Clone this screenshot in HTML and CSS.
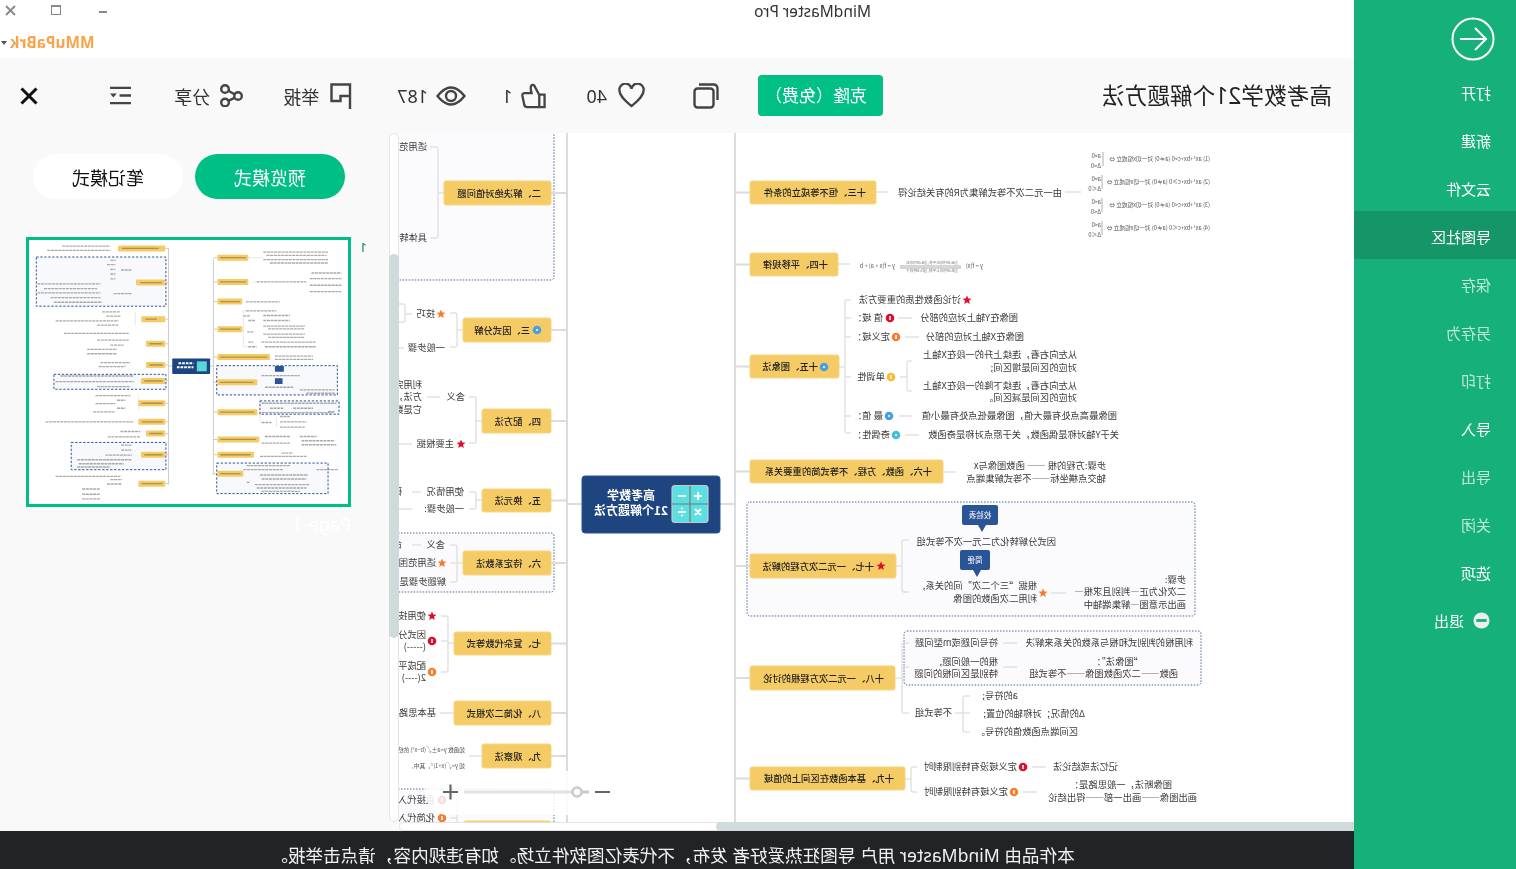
FILE: index.html
```html
<!DOCTYPE html>
<html lang="zh-CN">
<head>
<meta charset="utf-8">
<title>MindMaster Pro</title>
<link rel="stylesheet" href="styles.css">
</head>
<body>
<div class="page">
  <aside class="sidebar">
    <svg class="back" viewBox="0 0 44 44"><circle cx="22" cy="22" r="20.5"/><path d="M9 22H35M20 11L9 22L20 33"/></svg>
    <nav class="menu">
      <div class="item">打开</div>
      <div class="item">新建</div>
      <div class="item">云文件</div>
      <div class="item active">导图社区</div>
      <div class="item dim">保存</div>
      <div class="item dim">另存为</div>
      <div class="item dim">打印</div>
      <div class="item">导入</div>
      <div class="item dim">导出</div>
      <div class="item dim">关闭</div>
      <div class="item">选项</div>
      <div class="item quit"><svg class="quit-icon" viewBox="0 0 18 18"><circle cx="9" cy="9" r="8.5"/><rect x="3.5" y="7.5" width="11" height="3"/></svg>退出</div>
    </nav>
  </aside>
  <main class="main">
    <header class="titlebar">
      <div class="win-row">
        <span class="app-name">MindMaster Pro</span>
        <div class="win-controls">
          <span class="win-min"></span>
          <span class="win-max"></span>
          <svg class="win-close" viewBox="0 0 11 11"><path d="M1 1L10 10M10 1L1 10"/></svg>
        </div>
      </div>
      <div class="user-row"><span class="caret"></span><span class="user">MMuPaBrk</span></div>
    </header>
    <section class="toolbar">
      <h1 class="doc-title">高考数学21个解题方法</h1>
      <button class="clone">克隆（免费）</button>
      <svg class="ico ico-copy" viewBox="0 0 26 26"><path d="M1.5 17V5.5Q1.5 1.5 5.500 1.500H20"/><rect x="5.500" y="5.500" width="19" height="19" rx="3"/></svg>
      <div class="tool t-heart"><svg class="ico ico-heart" viewBox="0 0 28 25"><path d="M14 23.500C5 16 1.500 12 1.500 7.500A6.200 6.200 0 0 1 14 5.500A6.200 6.200 0 0 1 26.500 7.500C26.500 12 23 16 14 23.500Z"/></svg><span>40</span></div>
      <div class="tool t-thumb"><svg class="ico ico-thumb" viewBox="0 0 26 26"><path d="M1.500 11.500H7V24.500H1.500ZM7 12L12 2.500Q14 .5 15.500 2.500Q16.500 5 15 10H22Q25 10 24.500 13L22.500 22.500Q22 24.500 19.500 24.500H7"/></svg><span>1</span></div>
      <div class="tool t-eye"><svg class="ico ico-eye" viewBox="0 0 30 22"><path d="M1.500 11Q15 -6 28.500 11Q15 28 1.500 11Z"/><circle cx="15" cy="11" r="5"/></svg><span>187</span></div>
      <div class="tool t-flag"><svg class="ico ico-flag" viewBox="0 0 22 26"><path d="M2 26V1.500H20.500V18H11.500V13H2"/></svg><span>举报</span></div>
      <div class="tool t-share"><svg class="ico ico-share" viewBox="0 0 24 23"><circle cx="5" cy="12" r="3.800"/><circle cx="18" cy="5" r="3.800"/><circle cx="18" cy="18.500" r="3.800"/><path d="M8.500 10.200L14.700 6.800M8.500 13.800L14.700 16.800"/></svg><span>分享</span></div>
      <svg class="ico ico-lines" viewBox="0 0 23 20"><path d="M1 2H23M1 18H23M1 10H13"/><polygon class="tri" points="16,8 23,8 19.500,12"/></svg>
      <svg class="ico ico-x" viewBox="0 0 18 18"><path d="M1.500 1.500L16.500 16.500M16.500 1.500L1.500 16.500"/></svg>
    </section>
    <section class="workspace">
      <div class="map-col">
        <svg class="map" viewBox="162 133 955 689" xmlns="http://www.w3.org/2000/svg">
          <defs>
            <polygon id="star" points="0,-4.500 1.300,-1.500 4.500,-1.300 2,.8 2.800,4 0,2.300 -2.800,4 -2,.8 -4.500,-1.300 -1.300,-1.500"/>
          </defs>
          <g transform="translate(1516,0) scale(-1,1)">
            <rect class="box" x="380" y="100" width="174" height="180" rx="3"/>
            <rect class="box" x="380" y="533" width="174" height="59" rx="3"/>
            <rect class="box" x="380" y="789" width="174" height="120" rx="3"/>
            <rect class="box" x="747" y="502" width="448" height="114" rx="3"/>
            <rect class="box" x="904" y="631" width="297" height="54" rx="3"/>

            <path class="trunk" d="M735 133V822M567 133V822M720 504H735M567 504H582M735 192.500H750M735 264.500H750M735 366.500H750M735 471.500H750M735 566H750M735 678H750M735 778.500H750M551 193H567M551 330H567M551 421H567M551 500.500H567M551 563H567M551 643.500H567M551 713H567M551 756H567"/>
            <path class="link" d="M876 192H888M1065 192H1081M838 264H850M839 367H845M851 300H847Q845 300 845 302V431Q845 433 847 433H851M845 318H851M845 337H851M845 377H851M845 416H851M898 318H912M905 337H919M900 377H907M912 361H909Q907 361 907 363V389Q907 391 909 391H912M899 416H912M905 435H919M943 472H956M896 566H902M909 540H904Q902 540 902 542V590Q902 592 904 592H909M1051 593H1066M895 678H902M909 643H904Q902 643 902 645V711Q902 713 904 713H909M902 667H909M1003 643H1017M1003 667H1017M955 713H970M970 696H965Q963 696 963 698V730Q963 732 965 732H970M905 779H911M917 767H913Q911 767 911 769V790Q911 792 913 792H917M1032 767H1046M1023 792H1037"/>
            <path class="link" d="M444 193H438M430 147H436Q438 147 438 149V236Q438 238 436 238H430M463 330H457M450 313H455Q457 313 457 315V345Q457 347 455 347H450M405 314H412M399 304H403Q405 304 405 306V320Q405 322 403 322H399M399 348H404M482 421H476M469 397H474Q476 397 476 399V441Q476 443 474 443H469M427 397H440M399 444H412M482 500H476M469 492H474Q476 492 476 494V507Q476 509 474 509H469M412 492H421M399 509H412M463 563H457M450 545H455Q457 545 457 547V580Q457 582 455 582H450M450 563H457M412 545H421M454 643H448M441 616H446Q448 616 448 618V670Q448 672 446 672H441M441 641H448M454 713H440M482 756H469M450 800H455Q457 800 457 802V822M450 818H457"/>
            <path class="thin" d="M1103 152V166M1102 175V189M1102 198V212M1102 221V235M900 266H961"/>
            <path class="thin" d="M900 268H961"/>

            <rect class="node" x="750" y="181" width="126" height="23" rx="2"/>
            <rect class="node" x="750" y="253" width="88" height="23" rx="2"/>
            <rect class="node" x="750" y="355" width="89" height="23" rx="2"/>
            <rect class="node" x="750" y="460" width="193" height="23" rx="2"/>
            <rect class="node" x="750" y="554" width="146" height="24" rx="2"/>
            <rect class="node" x="750" y="666" width="145" height="24" rx="2"/>
            <rect class="node" x="750" y="767" width="155" height="23" rx="2"/>
            <rect class="node" x="444" y="181" width="107" height="24" rx="2"/>
            <rect class="node" x="463" y="318" width="88" height="24" rx="2"/>
            <rect class="node" x="482" y="409" width="69" height="24" rx="2"/>
            <rect class="node" x="482" y="489" width="69" height="23" rx="2"/>
            <rect class="node" x="463" y="551" width="88" height="24" rx="2"/>
            <rect class="node" x="454" y="632" width="97" height="23" rx="2"/>
            <rect class="node" x="454" y="701" width="97" height="24" rx="2"/>
            <rect class="node" x="482" y="744" width="69" height="24" rx="2"/>
            <rect class="node" x="464" y="821" width="87" height="24" rx="2"/>

            <rect class="center" x="582" y="476" width="138" height="57" rx="3"/>
            <rect class="calc" x="672" y="485.500" width="36" height="37" rx="3"/>
            <path class="calc-grid" d="M690 486V522M672 504H708"/>
            <path class="calc-sign" d="M694 496H702M698 492V500M678 496H686M678 512H686M695 509L701 515M701 509L695 515"/>
            <circle class="calc-dot" cx="682" cy="508.500" r="1"/>
            <circle class="calc-dot" cx="682" cy="515.500" r="1"/>

            <use class="st-red" href="#star" x="967" y="300"/>
            <use class="st-red" href="#star" x="881" y="566"/>
            <use class="st-orange" href="#star" x="1043" y="593"/>
            <use class="st-orange" href="#star" x="441" y="314"/>
            <use class="st-red" href="#star" x="461" y="444"/>
            <use class="st-orange" href="#star" x="442" y="563"/>
            <use class="st-red" href="#star" x="432" y="616"/>

            <circle class="dot-blue" cx="824" cy="367" r="4.300"/>
            <circle class="dot-blue" cx="537" cy="330" r="4.300"/>
            <circle class="dot-red" cx="890" cy="318" r="4.300"/>
            <circle class="dot-orange" cx="896" cy="337" r="4.300"/>
            <circle class="dot-yellow" cx="891" cy="377" r="4.300"/>
            <circle class="dot-blue" cx="889" cy="416" r="4.300"/>
            <circle class="dot-cyan" cx="896" cy="435" r="4.300"/>
            <circle class="dot-red" cx="1023" cy="767" r="4.300"/>
            <circle class="dot-orange" cx="1014" cy="792" r="4.300"/>
            <circle class="dot-red" cx="432" cy="641" r="4.300"/>
            <circle class="dot-orange" cx="432" cy="672" r="4.300"/>
            <circle class="dot-red" cx="442" cy="800" r="4.300"/>
            <circle class="dot-orange" cx="442" cy="818" r="4.300"/>
            <path class="dot-mark" d="M824 366V368M537 329V331M890 316V320M896 335V339M891 375V379M889 415V417M896 434V436M1023 765V769M1014 790V794M432 639V643M432 670V674M442 798V802M442 816V820"/>

            <path class="bubble" d="M964 505H996Q998 505 998 507V523Q998 525 996 525H986L982 532L978 525H964Q962 525 962 523V507Q962 505 964 505Z"/>
            <path class="bubble" d="M962 550H988Q990 550 990 552V568Q990 570 988 570H981L977 577L973 570H962Q960 570 960 568V552Q960 550 962 550Z"/>
          </g>

          <text class="nt" x="650" y="196">十三、恒不等成立的条件</text>
          <text class="nt" x="688" y="268">十四、平移规律</text>
          <text class="nt" x="698" y="370">十五、图象法</text>
          <text class="nt" x="584" y="475">十六、函数、方程、不等式简的重要关系</text>
          <text class="nt" x="642" y="570">十七、一元二次方程的解法</text>
          <text class="nt" x="632" y="682">十八、一元二次方程根的讨论</text>
          <text class="nt" x="622" y="782">十九、基本函数在区间上的值域</text>
          <text class="nt" x="975" y="197">二、解决绝对值问题</text>
          <text class="nt" x="986" y="334">三、因式分解</text>
          <text class="nt" x="975" y="425">四、配方法</text>
          <text class="nt" x="975" y="504">五、换元法</text>
          <text class="nt" x="975" y="567">六、待定系数法</text>
          <text class="nt" x="975" y="647">七、复杂代数等式</text>
          <text class="nt" x="975" y="717">八、化简二次根式</text>
          <text class="nt" x="975" y="760">九、观察法</text>

          <text class="ct" x="885" y="500">高考数学</text>
          <text class="ct" x="885" y="515">21个解题方法</text>

          <text x="454" y="196">由一元二次不等式解集为R的有关结论得</text>
          <text class="fm" x="306" y="161">(1)  ax²+bx+c&gt;0 (a≠0) 对一切x恒成立 ⇔</text>
          <text class="fm" x="306" y="184">(2)  ax²+bx+c≥0 (a≠0) 对一切x恒成立 ⇔</text>
          <text class="fm" x="306" y="207">(3)  ax²+bx+c&lt;0 (a≠0) 对一切x恒成立 ⇔</text>
          <text class="fm" x="306" y="230">(4)  ax²+bx+c≤0 (a≠0) 对一切x恒成立 ⇔</text>
          <text class="fm" x="415" y="158">a&gt;0</text><text class="fm" x="415" y="168">Δ&lt;0</text>
          <text class="fm" x="415" y="181">a&gt;0</text><text class="fm" x="415" y="191">Δ≤0</text>
          <text class="fm" x="415" y="204">a&lt;0</text><text class="fm" x="415" y="214">Δ&lt;0</text>
          <text class="fm" x="415" y="227">a&lt;0</text><text class="fm" x="415" y="237">Δ≤0</text>
          <text class="fm" x="533" y="268">y = f(x)</text>
          <text class="fs" x="558" y="264">当a&gt;0时向左平移,当a&lt;0时向右</text>
          <text class="fs" x="558" y="272">当b&gt;0时向上平移,当b&lt;0时向下</text>
          <text class="fm" x="621" y="268">y = f(x + a) + b</text>

          <text x="555" y="303">讨论函数性质的重要方法</text>
          <text x="633" y="321">值 域：</text><text x="498" y="321">图像在Y轴上对应的部分</text>
          <text x="626" y="340">定义域：</text><text x="492" y="340">图像在X轴上对应的部分</text>
          <text x="631" y="380">单调性</text>
          <text x="439" y="358">从左向右看，连续上升的一段在X轴上</text>
          <text x="439" y="371">对应的区间是增区间;</text>
          <text x="439" y="389">从左向右看，连续下降的一段在X轴上</text>
          <text x="439" y="401">对应的区间是减区间。</text>
          <text x="633" y="419">最 值：</text><text x="399" y="419">图像最高点处有最大值，图像最低点处有最小值</text>
          <text x="626" y="438">奇偶性：</text><text x="397" y="438">关于Y轴对称是偶函数，关于原点对称是奇函数</text>
          <text x="410" y="469">步骤:方程的根 —— 函数图像与x</text>
          <text x="410" y="482">轴交点横坐标——不等式解集端点</text>

          <text class="bt" x="536" y="518">校验表</text>
          <text class="bt" x="541" y="563">简便</text>
          <text x="460" y="545">因式分解转化为二元一次不等式组</text>
          <text x="479" y="589">根据“三个二次”间的关系,</text>
          <text x="479" y="602">利用二次函数的图像</text>
          <text x="330" y="583">步骤:</text>
          <text x="330" y="595">二次化为正—判别且求根—</text>
          <text x="330" y="608">画出示意图—解集端轴中</text>

          <text x="518" y="646">符号问题或m型问题</text>
          <text x="323" y="646">利用根的判别式和根与系数的关系来解决</text>
          <text x="518" y="665">根的一般问题,</text>
          <text x="518" y="677">特别是区间根的问题</text>
          <text x="373" y="665">“图像法”：</text>
          <text x="338" y="677">函数——二次函数图像——不等式组</text>
          <text x="564" y="716">不等式组</text>
          <text x="498" y="699">a的符号;</text>
          <text x="431" y="717">Δ的情况；对称轴的位置;</text>
          <text x="438" y="735">区间端点函数值的符号。</text>
          <text x="499" y="770">定义域没有特别限制时</text>
          <text x="398" y="770">记忆法或结论法</text>
          <text x="508" y="795">定义域有特别限制时</text>
          <text x="344" y="788">图像断法，一般思路是：</text>
          <text x="319" y="801">画出图像——画出一部——得出结论</text>

          <text x="1089" y="150">适用范围</text>
          <text x="1089" y="241">具体转化</text>
          <text x="1081" y="317">技巧</text>
          <text x="1071" y="351">一般步骤</text>
          <text x="1051" y="400">含义</text>
          <text x="1094" y="388">利用完全</text>
          <text x="1094" y="400">方法，</text>
          <text x="1094" y="413">它是数学</text>
          <text x="1062" y="447">主要根据</text>
          <text x="1052" y="495">使用情况</text>
          <text x="1114" y="495">确定</text>
          <text x="1052" y="512">一般步骤:</text>
          <text x="1071" y="548">含义</text>
          <text x="1114" y="548">命题</text>
          <text x="1080" y="566">适用范围</text>
          <text x="1070" y="585">解题步骤是</text>
          <text x="1090" y="619">使用技巧</text>
          <text x="1090" y="638">因式分解</text>
          <text x="1090" y="650">(-----)</text>
          <text x="1090" y="669">配成平方</text>
          <text x="1090" y="681">2(----)</text>
          <text x="1080" y="716">基本思路</text>
          <text class="fm" x="1051" y="752">如函数 y=a±√(b−x²) 的结构</text>
          <text class="fm" x="1051" y="768">如 y=√(x+1)²，其中,</text>
          <text x="1081" y="803">直接代入</text>
          <text x="1081" y="821">化简代入</text>

          <g transform="translate(1516,0) scale(-1,1)">
            <rect class="pill" x="425" y="771" width="201" height="44" rx="22"/>
            <path class="zoom-track" d="M464 792H572"/>
            <circle class="zoom-knob" cx="577" cy="792" r="4.500"/>
            <path class="zoom-stub" d="M582 792H589"/>
            <path class="zoom-btn" d="M443 792H458M450.500 784.500V799.500M595 792H610"/>
          </g>
        </svg>
        <div class="hscroll"><div class="hthumb"></div></div>
      </div>
      <div class="vscroll"><div class="vthumb"></div></div>
      <aside class="panel">
        <div class="modes">
          <button class="mode on">预览模式</button>
          <button class="mode">笔记模式</button>
        </div>
        <div class="thumb-row">
          <span class="page-no">1</span>
          <svg class="thumb" viewBox="85 30 960 792" xmlns="http://www.w3.org/2000/svg">
            <defs><filter id="soft"><feGaussianBlur stdDeviation="2"/></filter></defs>
            <g transform="translate(1130,0) scale(-1,1)" filter="url(#soft)">
              <path class="th-trunk" d="M640 85V735M505 52V765M630 408H640M505 408H516M640 82H652M640 155H652M640 214H652M640 297H652M640 381H652M640 457H652M640 547H652M640 629H652M640 675H652M640 732H652M495 54H505M495 157H505M495 267H505M495 341H505M495 405H505M495 453H505M495 520H505M495 576H505M495 611H505M495 675H505M495 762H505"/>
              <path class="th-link" d="M757 155H770M745 82H790M730 240V350M730 242H738M730 350H745M780 437V548M780 548V578M830 565V592M402 119V190M345 119H402M405 245V285M375 398V410M415 497V546M380 646V702"/>
              <rect class="th-box" x="107" y="80" width="390" height="148"/>
              <rect class="th-box" x="160" y="433" width="337" height="45"/>
              <rect class="th-box" x="212" y="638" width="285" height="82"/>
              <rect class="th-box" x="650" y="407" width="363" height="88"/>
              <rect class="th-box" x="780" y="513" width="238" height="40"/>
              <rect class="th-box" x="650" y="700" width="335" height="92"/>
              <path class="th-text" d="M185 47H330M140 60H330M330 90H345M320 103H345M330 117H345M330 131H345M330 146H345M362 119H395M340 190H395M110 161H300M130 175H290M110 188H300M150 202H300M160 216H305M305 245H360M318 258H360M165 272H355M290 285H355M190 310H385M290 330H385M330 345H370M260 358H350M260 371H350M300 398H390M295 410H375M180 438H400M165 455H400M290 470H390M285 497H390M285 521H345M278 546H345M350 511H375M350 535H375M135 576H400M360 605H420M322 621H420M362 646H395M362 661H395M315 676H395M230 690H395M235 702H370M230 712H330M165 740H360M330 750H365M320 763H365M245 778H300M245 794H300M245 808H300M790 65H985M800 75H980M790 88H985M810 98H985M770 155H920M935 128H1025M930 145H1025M930 165H1025M930 184H1025M738 215H840M738 242H830M730 257H750M790 256H870M745 271H765M790 271H870M742 305H760M790 288H915M805 296H915M790 312H915M805 322H915M745 336H760M785 336H950M745 350H770M795 350H950M825 378H940M825 388H940M785 437H900M795 472H880M900 480H1005M920 490H1005M785 520H1010M810 535H850M880 535H940M985 545H1005M785 548H1000M785 578H815M840 560H870M840 576H920M840 592H915M795 620H870M900 620H950M785 640H870M905 633H1005M905 645H1010M845 670H880M780 680H920M740 708H870M950 720H1015M730 720H850M740 758H750M780 736H925M785 748H920M765 765H930M770 775H920M785 785H900"/>
              <g class="th-node">
                <rect x="652" y="73" width="93" height="18" rx="3"/><rect x="652" y="146" width="93" height="18" rx="3"/><rect x="652" y="205" width="75" height="18" rx="3"/><rect x="652" y="288" width="75" height="18" rx="3"/><rect x="652" y="372" width="158" height="18" rx="3"/><rect x="652" y="448" width="120" height="18" rx="3"/><rect x="652" y="538" width="120" height="18" rx="3"/><rect x="652" y="620" width="126" height="18" rx="3"/><rect x="652" y="666" width="110" height="18" rx="3"/><rect x="652" y="723" width="78" height="18" rx="3"/><rect x="353" y="45" width="142" height="18" rx="3"/><rect x="407" y="148" width="88" height="18" rx="3"/><rect x="423" y="258" width="72" height="18" rx="3"/><rect x="437" y="332" width="58" height="18" rx="3"/><rect x="437" y="396" width="58" height="18" rx="3"/><rect x="422" y="444" width="73" height="18" rx="3"/><rect x="414" y="511" width="81" height="18" rx="3"/><rect x="414" y="567" width="81" height="18" rx="3"/><rect x="437" y="602" width="58" height="18" rx="3"/><rect x="422" y="666" width="73" height="18" rx="3"/><rect x="414" y="753" width="81" height="18" rx="3"/>
              </g>
              <path class="th-node-text" d="M660 82H738M660 155H738M660 214H720M660 297H720M660 381H802M660 457H760M660 547H762M660 629H768M660 675H752M660 732H722M365 54H475M420 157H485M435 267H470M447 341H487M447 405H487M432 453H487M424 520H487M424 576H487M447 611H487M432 675H487M424 762H487"/>
              <rect class="th-center" x="516" y="385" width="114" height="47" rx="3"/>
              <rect class="th-calc" x="590" y="394" width="30" height="30"/>
              <path class="th-white" d="M535 400H580M530 412H580"/>
              <path class="th-bubble" d="M825 408H852V425H825ZM825 445H848V462H825Z"/>
            </g>
            <g transform="translate(1130,0) scale(-1,1)">
              <path class="th-box-line" d="M107 80H497V228H107ZM160 433H497V478H160ZM212 638H497V720H212ZM650 407H1013V495H650ZM780 513H1018V553H780ZM650 700H985V792H650Z"/>
            </g>
          </svg>
        </div>
        <div class="ghost">Page-1</div>
      </aside>
    </section>
    <footer class="banner">本作品由 MindMaster 用户 导图狂热爱好者 发布，不代表亿图软件立场。如有违规内容，请点击举报。</footer>
  </main>
</div>
</body>
</html>
```
FILE: styles.css
```css
* { box-sizing: border-box; }
html, body { margin: 0; padding: 0; overflow: hidden; }
body { font-family: "Noto Sans", "Noto Sans CJK SC", sans-serif; color: #333; background: #fff; }

.page { width: 1516px; height: 869px; display: flex; transform: scaleX(-1); overflow: hidden; }

/* sidebar */
.sidebar { width: 162px; flex: none; background: #16b07a; padding-top: 17px; color: #fff; }
.back { display: block; width: 44px; height: 44px; margin-left: 21px; fill: none; stroke: #fff; stroke-width: 2; }
.menu { margin-top: 6px; }
.item { height: 48px; padding: 2px 0 0 25px; display: flex; align-items: center; font-size: 15px; color: #fff; }
.item.active { background: #149668; }
.item.dim { color: rgba(255,255,255,.72); }
.quit { gap: 9px; padding-left: 26px; }
.quit-icon { width: 17px; height: 17px; flex: none; }
.quit-icon circle { fill: #eee; }
.quit-icon rect { fill: #16b07a; }

/* main */
.main { flex: 1; min-width: 0; display: flex; flex-direction: column; }
.titlebar { height: 58px; background: #fff; flex: none; }
.win-row { height: 28px; display: flex; padding-left: 483px; }
.app-name { font-size: 15.500px; line-height: 22px; color: #333; }
.win-controls { margin-left: auto; display: flex; align-items: flex-start; }
.win-min { width: 8px; height: 2px; margin-top: 11px; background: #888; }
.win-max { width: 10px; height: 10px; margin: 5px 0 0 38px; border: 1px solid #888; border-top-width: 2px; }
.win-close { width: 11px; height: 11px; margin: 5px 5px 0 35px; fill: none; stroke: #888; stroke-width: 1.800; }
.user-row { height: 30px; display: flex; align-items: center; justify-content: flex-start; padding-right: 1px; flex-direction: row-reverse; gap: 3px; }
.user { font-size: 15.400px; font-weight: 700; color: #f9a44a; margin-top: -1px; }
.caret { width: 0; height: 0; border-left: 3.500px solid transparent; border-right: 3.500px solid transparent; border-top: 4px solid #555; }

.toolbar { height: 75px; flex: none; background: #f9f9f9; display: flex; align-items: center; padding-left: 22px; }
.doc-title { margin: 0 0 3px; width: 229px; flex: none; font-size: 22.700px; font-weight: 400; color: #222; white-space: nowrap; }
.clone { width: 125px; height: 41px; margin-left: 220px; flex: none; border: 0; border-radius: 4px; background: #00c086; color: #fff; font: 400 17px "Noto Sans", "Noto Sans CJK SC", sans-serif; padding: 0 0 2px 9px; white-space: nowrap; }
.ico { flex: none; fill: none; stroke: #444; stroke-width: 2.400; display: block; }
.ico-copy { width: 26px; height: 26px; margin-left: 39px; }
.tool { display: flex; align-items: center; gap: 11px; font-size: 18px; color: #333; flex: none; }
.t-heart { margin-left: 48px; }
.t-thumb { margin-left: 40px; gap: 9px; }
.t-eye { margin-left: 36px; gap: 8px; }
.t-flag { margin-left: 45px; }
.t-share { margin-left: 40px; gap: 9px; }
.ico-heart { width: 27px; height: 25px; }
.ico-thumb { width: 25px; height: 26px; }
.ico-eye { width: 30px; height: 22px; }
.ico-flag { width: 22px; height: 26px; }
.ico-share { width: 24px; height: 23px; }
.ico-lines { width: 22px; height: 19px; margin-left: 42px; }
.ico-lines .tri { fill: #444; stroke: none; }
.ico-x { width: 18px; height: 18px; margin-left: 72px; stroke: #111; stroke-width: 3; }

/* workspace */
.workspace { flex: 1; min-height: 0; display: flex; background: #f9f9f9; }
.map-col { width: 955px; flex: none; display: flex; flex-direction: column; }
.map { display: block; width: 955px; height: 689px; flex: none; background: #fff; overflow: hidden; }
.map text { font-family: "Noto Sans CJK SC", sans-serif; font-size: 9.300px; fill: #3a3a3a; }
.map .nt { fill: #222; font-weight: 500; }
.map .ct { fill: #fff; font-size: 12px; font-weight: 700; text-anchor: middle; }
.map .fm { font-size: 5.700px; fill: #555; }
.map .fs { font-size: 3.800px; fill: #777; }
.map .bt { fill: #fff; font-size: 7.500px; text-anchor: middle; }

.box { fill: #fbfbfe; stroke: #4a6a9e; stroke-width: 1; stroke-dasharray: 1.500 1.500; }
.trunk { fill: none; stroke: #dcdcdc; stroke-width: 2; }
.link { fill: none; stroke: #e2e2e2; stroke-width: 1.500; }
.thin { fill: none; stroke: #777; stroke-width: .6; }
.node { fill: #f5cb66; stroke: #f7d480; stroke-width: 1; }
.center { fill: #1f4580; stroke: #2a5391; }
.calc { fill: #5cdfe3; stroke: #c8c8c8; stroke-width: 1.200; }
.calc-grid { stroke: #777; stroke-width: 1.200; fill: none; }
.calc-sign { stroke: #fff; stroke-width: 2; fill: none; }
.calc-dot { fill: #fff; }
.st-red { fill: #e00b2b; }
.st-orange { fill: #f97a2c; }
.dot-blue { fill: #4a9fe0; }
.dot-red { fill: #d8102c; }
.dot-orange { fill: #f57f30; }
.dot-yellow { fill: #fdb92c; }
.dot-cyan { fill: #45bfd8; }
.dot-mark { stroke: #fff; stroke-width: 1.500; fill: none; }
.bubble { fill: #295496; }
.pill { fill: rgba(255,255,255,.86); }
.zoom-track { stroke: #e2e2e2; stroke-width: 3; fill: none; }
.zoom-knob { fill: #fff; stroke: #c9c9c9; stroke-width: 2.500; }
.zoom-stub { stroke: #c9c9c9; stroke-width: 3; fill: none; }
.zoom-btn { stroke: #666; stroke-width: 2.200; fill: none; }

.hscroll { height: 9px; flex: none; background: #fff; border: 1px solid #e4e4e4; border-left: 0; border-radius: 0 5px 5px 0; }
.hthumb { width: 638px; height: 9px; margin-top: -1px; background: #d1dbdb; border-radius: 0 5px 5px 0; }
.vscroll { width: 10px; height: 689px; flex: none; background: #fff; border: 1px solid #e4e4e4; border-radius: 5px; }
.vthumb { width: 10px; height: 384px; margin: 120px 0 0 -1px; background: #cfdada; border-radius: 5px; }

.panel { flex: 1; min-width: 0; padding-top: 21px; }
.modes { display: flex; gap: 12px; padding-left: 44px; }
.mode { width: 150px; height: 45px; border: 0; padding: 0; border-radius: 23px; background: #fff; color: #111; font: 400 18px "Noto Sans", "Noto Sans CJK SC", sans-serif; }
.mode.on { background: #00bf86; color: #fff; }
.thumb-row { display: flex; margin-top: 38px; padding-left: 22px; }
.page-no { width: 16px; flex: none; font-size: 13px; line-height: 20px; color: #0a7d60; }
.thumb { display: block; width: 325px; height: 270px; flex: none; border: 3px solid #00bf86; background: #fff; }
.th-trunk { fill: none; stroke: #ccc; stroke-width: 3; }
.th-link { fill: none; stroke: #ddd; stroke-width: 2; }
.th-box { fill: #f8f9fc; stroke: none; }
.th-box-line { fill: none; stroke: #2f5597; stroke-width: 3; stroke-dasharray: 7 5; }
.th-text { fill: none; stroke: #8c8c8c; stroke-width: 4; stroke-dasharray: 9 2; opacity: .75; }
.th-node { fill: #f5cb66; }
.th-node-text { fill: none; stroke: #8f7a3e; stroke-width: 4; opacity: .7; }
.th-center { fill: #1f4580; }
.th-calc { fill: #5ad6d8; }
.th-white { stroke: #fff; stroke-width: 6; fill: none; stroke-dasharray: 8 3; }
.th-bubble { fill: #295496; }
.ghost { margin: 5px 0 0 38px; font-size: 18px; color: #fff; }

.banner { height: 38px; flex: none; padding: 8px 0 0 9px; background: #212426; color: #f2f2f2; display: flex; align-items: center; justify-content: center; font-size: 17.600px; white-space: pre; }
```
